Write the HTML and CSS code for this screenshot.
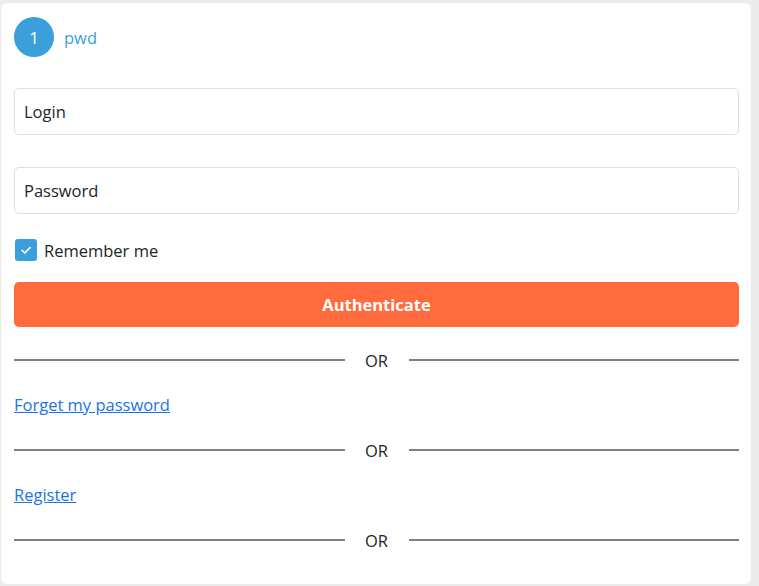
FILE: index.html
```html
<!DOCTYPE html>
<html>
<head>
<meta charset="utf-8">
<link rel="stylesheet" href="styles.css">
</head>
<body>
<div class="card">
  <div class="step">
    <span class="step-num">1</span>
    <span class="step-label">pwd</span>
  </div>
  <form class="form">
    <input class="field" type="text" placeholder="Login">
    <input class="field field-pwd" type="password" placeholder="Password">
    <label class="remember">
      <span class="checkbox"><svg width="14" height="14" viewBox="0 0 14 14"><path d="M3 7.2 L5.8 10 L11 4.6" fill="none" stroke="#fff" stroke-width="1.6" stroke-linecap="round" stroke-linejoin="round"/></svg></span>
      <span>Remember me</span>
    </label>
    <button class="btn" type="button">Authenticate</button>
  </form>
  <div class="sep"><span class="line"></span><span class="or">OR</span><span class="line"></span></div>
  <a class="link" href="#">Forget my password</a>
  <div class="sep"><span class="line"></span><span class="or">OR</span><span class="line"></span></div>
  <a class="link" href="#">Register</a>
  <div class="sep"><span class="line"></span><span class="or">OR</span><span class="line"></span></div>
</div>
</body>
</html>
```
FILE: styles.css
```css
html, body {
  margin: 0;
  padding: 0;
}
body {
  background: #ebebeb;
  font-family: "Open Sans", "Noto Sans", sans-serif;
  font-size: 16.5px;
  color: #212529;
  height: 586px;
  overflow: hidden;
}
.card {
  margin: 3px 0 0 1px;
  width: 750px;
  height: 581px;
  box-sizing: border-box;
  background: #fff;
  border-radius: 6px;
  padding: 14px 12px 0 13px;
  display: flex;
  flex-direction: column;
}
.step {
  display: flex;
  align-items: center;
  gap: 10px;
  height: 40px;
}
.step-num {
  width: 40px;
  height: 40px;
  border-radius: 50%;
  background: #3a9fdb;
  color: #fff;
  display: flex;
  align-items: center;
  justify-content: center;
  font-size: 17px;
}
.step-label {
  color: #3a9fdb;
  font-size: 16.5px;
}
.form {
  display: flex;
  flex-direction: column;
  margin-top: 31px;
}
.field {
  height: 47px;
  box-sizing: border-box;
  border: 1px solid #dadfe2;
  border-radius: 5px;
  padding: 0 9px;
  font-family: inherit;
  font-size: 16.5px;
  color: #212529;
  outline: none;
}
.field::placeholder {
  color: #212529;
  opacity: 1;
}
.field-pwd {
  margin-top: 32px;
}
.remember {
  display: flex;
  align-items: center;
  gap: 7px;
  margin-top: 24px;
  height: 24px;
}
.checkbox {
  width: 22px;
  height: 22px;
  margin-left: 1px;
  border-radius: 3px;
  background: #3a9fdb;
  display: flex;
  align-items: center;
  justify-content: center;
}
.btn {
  margin-top: 20px;
  height: 45px;
  border: none;
  border-radius: 5px;
  background: #ff6b3d;
  color: #fff;
  font-family: inherit;
  font-weight: 700;
  font-size: 16.5px;
}
.sep {
  display: flex;
  align-items: center;
  gap: 20px;
  height: 24px;
  margin-top: 21px;
}
.line {
  flex: 1;
  height: 2px;
  background: #808080;
}
.or {
  color: #212529;
  width: 24px;
  text-align: center;
}
.link {
  color: #1a73e8;
  text-decoration: underline;
  align-self: flex-start;
  margin-top: 22px;
  line-height: 22px;
}
.link + .sep {
  margin-top: 22px;
}
```
